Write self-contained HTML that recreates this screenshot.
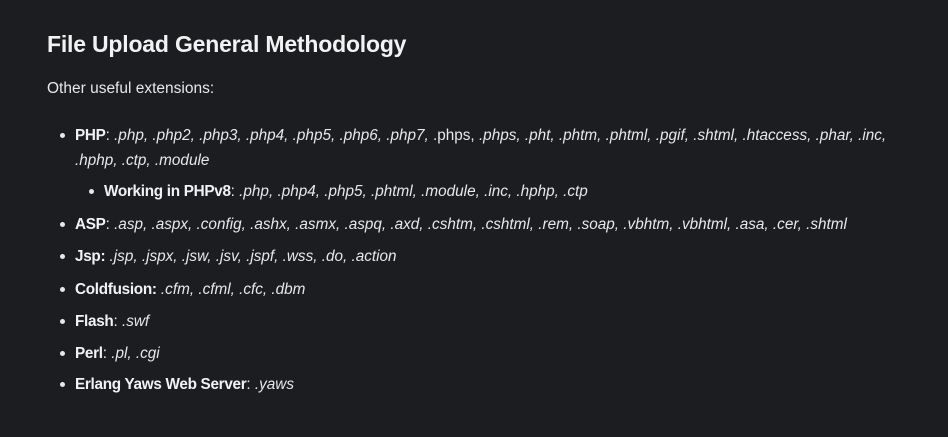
<!DOCTYPE html>
<html><head><style>
body{margin:0;background:#1b1d21;color:#e8e8e8;font-family:"Liberation Sans",Arial,sans-serif;width:948px;height:437px;overflow:hidden;}
h1{position:absolute;left:47px;top:31px;margin:0;font-size:23px;font-weight:bold;color:#f2f2f2;letter-spacing:-0.2px;}
.p{position:absolute;left:47px;top:80px;font-size:15.5px;}
.l{position:absolute;font-size:15.3px;white-space:nowrap;line-height:25px;}
.l b{font-weight:bold;color:#f2f2f2;letter-spacing:-0.3px}
.l i{font-style:italic}
.d{position:absolute;width:5px;height:5px;border-radius:50%;background:#e8e8e8;}
</style></head><body>
<h1>File Upload General Methodology</h1>
<div class="p">Other useful extensions:</div>

<div class="d" style="left:60px;top:133px"></div>
<div class="l" style="left:75px;top:123px"><b>PHP</b>: <i>.php, .php2, .php3, .php4, .php5, .php6, .php7,</i> .phps, <i>.phps, .pht, .phtm, .phtml, .pgif, .shtml, .htaccess, .phar, .inc,</i><br><i>.hphp, .ctp, .module</i></div>

<div class="d" style="left:89px;top:189px"></div>
<div class="l" style="left:104px;top:179px"><b>Working in PHPv8</b>: <i>.php, .php4, .php5, .phtml, .module, .inc, .hphp, .ctp</i></div>

<div class="d" style="left:60px;top:222px"></div>
<div class="l" style="left:75px;top:212px"><b>ASP</b>: <i>.asp, .aspx, .config, .ashx, .asmx, .aspq, .axd, .cshtm, .cshtml, .rem, .soap, .vbhtm, .vbhtml, .asa, .cer, .shtml</i></div>

<div class="d" style="left:60px;top:254px"></div>
<div class="l" style="left:75px;top:244px"><b>Jsp:</b> <i>.jsp, .jspx, .jsw, .jsv, .jspf, .wss, .do, .action</i></div>

<div class="d" style="left:60px;top:287px"></div>
<div class="l" style="left:75px;top:277px"><b>Coldfusion:</b> <i>.cfm, .cfml, .cfc, .dbm</i></div>

<div class="d" style="left:60px;top:319px"></div>
<div class="l" style="left:75px;top:309px"><b>Flash</b>: <i>.swf</i></div>

<div class="d" style="left:60px;top:351px"></div>
<div class="l" style="left:75px;top:341px"><b>Perl</b>: <i>.pl, .cgi</i></div>

<div class="d" style="left:60px;top:382px"></div>
<div class="l" style="left:75px;top:372px"><b>Erlang Yaws Web Server</b>: <i>.yaws</i></div>
</body></html>
